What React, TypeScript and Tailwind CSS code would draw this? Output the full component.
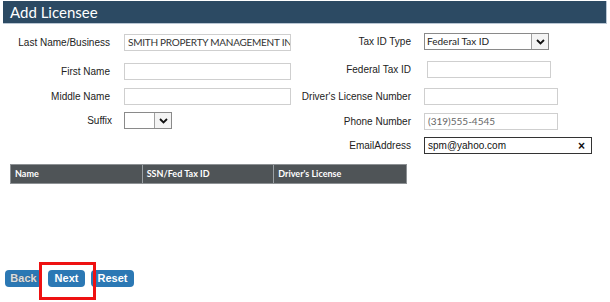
import React from 'react';

const labelCls = "text-right text-[10px] text-[#222] font-['Liberation_Sans',Arial,sans-serif] shrink-0";
const inputCls =
  "h-[17px] border border-[#cfcfcf] bg-white px-[3px] text-[10px] leading-[15px] text-[#333] font-['Lato','Open_Sans',sans-serif] overflow-hidden whitespace-nowrap";

const Chevron: React.FC = () => (
  <svg width="9" height="6" viewBox="0 0 9 6">
    <path d="M1 1 L4.5 4.5 L8 1" fill="none" stroke="#111" strokeWidth="1.8" />
  </svg>
);

const SelectBox: React.FC<{ value?: string; width: string }> = ({ value, width }) => (
  <div className={`${width} h-[17px] flex border border-[#8a8a8a] bg-white`}>
    <div className="flex-1 px-[2px] text-[10px] leading-[15px] text-[#222] font-['Lato','Open_Sans',sans-serif] whitespace-nowrap overflow-hidden">
      {value}
    </div>
    <div className="w-[17px] h-full flex items-center justify-center border-l border-[#a0a0a0] bg-[#f4f4f4]">
      <Chevron />
    </div>
  </div>
);

const Row: React.FC<{ label: string; labelW: string; gap: string; top: string; children: React.ReactNode }> = ({
  label,
  labelW,
  gap,
  top,
  children,
}) => (
  <div className={`flex items-center ${top}`}>
    <div className={`${labelCls} ${labelW}`}>{label}</div>
    <div className={gap}>{children}</div>
  </div>
);

export default function App() {
  return (
    <div className="w-[610px] h-[302px] bg-white relative overflow-hidden">
      <div className="mt-[1px] mx-[3px] h-[23px] bg-[#2c4a63] border-r border-b border-[#b9c6d3] flex items-center pl-[7px]">
        <span className="text-white text-[15px] font-['Lato','Open_Sans',sans-serif]">Add Licensee</span>
      </div>

      <div className="flex">
        {/* left column */}
        <div className="w-[300px]">
          <Row label="Last Name/Business" labelW="w-[110px]" gap="ml-[14px]" top="mt-[10px]">
            <div className={`${inputCls} w-[167px] bg-[#e9eef4] text-[#222] tracking-[-0.25px]`}>
              SMITH PROPERTY MANAGEMENT INC
            </div>
          </Row>
          <Row label="First Name" labelW="w-[110px]" gap="ml-[14px]" top="mt-[12px]">
            <div className={`${inputCls} w-[167px]`} />
          </Row>
          <Row label="Middle Name" labelW="w-[110px]" gap="ml-[14px]" top="mt-[8px]">
            <div className={`${inputCls} w-[167px]`} />
          </Row>
          <Row label="Suffix" labelW="w-[112px]" gap="ml-[12px]" top="mt-[7px]">
            <SelectBox width="w-[48px]" />
          </Row>
        </div>

        {/* right column */}
        <div className="flex-1">
          <Row label="Tax ID Type" labelW="w-[111px]" gap="ml-[13px]" top="mt-[9px]">
            <SelectBox value="Federal Tax ID" width="w-[125px]" />
          </Row>
          <Row label="Federal Tax ID" labelW="w-[111px]" gap="ml-[16px]" top="mt-[11px]">
            <div className={`${inputCls} w-[124px]`} />
          </Row>
          <Row label="Driver's License Number" labelW="w-[111px]" gap="ml-[13px]" top="mt-[10px]">
            <div className={`${inputCls} w-[134px]`} />
          </Row>
          <Row label="Phone Number" labelW="w-[111px]" gap="ml-[13px]" top="mt-[8px]">
            <div className={`${inputCls} w-[134px] text-[#666]`}>(319)555-4545</div>
          </Row>
          <Row label="EmailAddress" labelW="w-[111px]" gap="ml-[13px]" top="mt-[7px]">
            <div className="w-[168px] h-[17px] flex items-center justify-between border border-[#333] bg-white pl-[3px] pr-[6px] text-[10px] text-[#111] font-['Liberation_Sans',Arial,sans-serif]">
              <span>spm@yahoo.com</span>
              <span className="text-[12px] font-bold leading-none">×</span>
            </div>
          </Row>
        </div>
      </div>

      {/* results grid */}
      <div className="mt-[10px] ml-[10px] w-[397px] h-[20px] bg-[#4f5457] border border-[#8d9194] grid grid-cols-3 text-white text-[9px] font-bold font-['Lato','Open_Sans',sans-serif]">
        <div className="flex items-center pl-[4px] border-r border-[#9aa0a4]">Name</div>
        <div className="flex items-center pl-[4px] border-r border-[#9aa0a4]">SSN/Fed Tax ID</div>
        <div className="flex items-center pl-[4px]">Driver's License</div>
      </div>

      {/* buttons */}
      <div className="mt-[86px] ml-[5px] flex items-center gap-[6px] font-['Liberation_Sans',Arial,sans-serif] text-[11px] font-bold">
        <button className="h-[17px] w-[37px] rounded-[4px] bg-[#2b78b4] text-[#d8dde2] [text-shadow:0_0_1px_#555]">Back</button>
        <button className="h-[17px] w-[37px] rounded-[4px] bg-[#2b78b4] text-white">Next</button>
        <button className="h-[17px] w-[43px] rounded-[4px] bg-[#2b78b4] text-white">Reset</button>
      </div>

      {/* highlight */}
      <div className="absolute left-[39px] top-[262px] w-[57px] h-[38px] border-[3px] border-[#ee1111]" />
    </div>
  );
}
